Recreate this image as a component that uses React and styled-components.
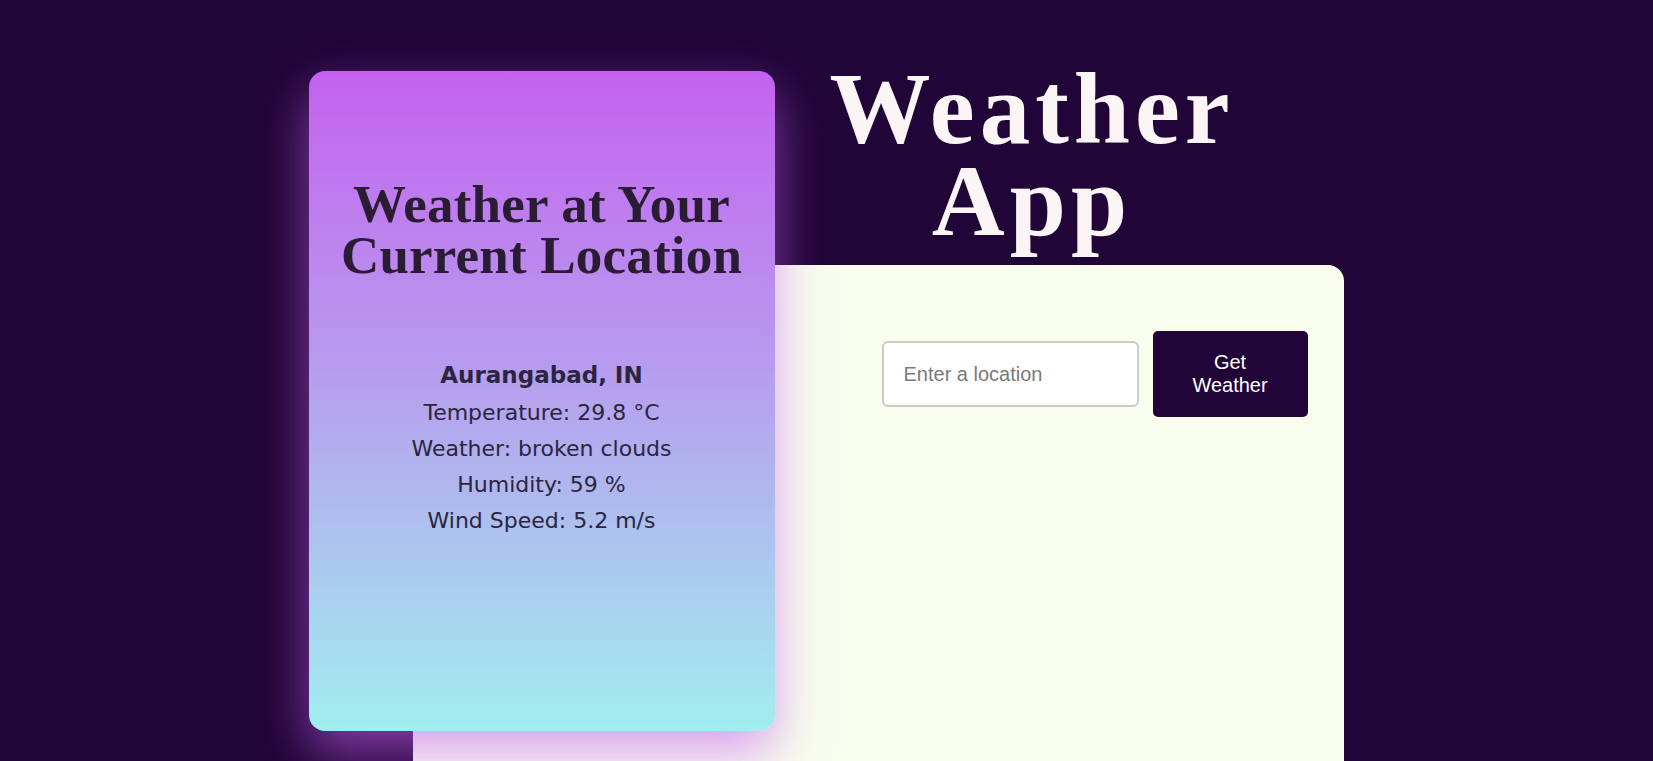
import React from 'react';
import styled, { createGlobalStyle } from 'styled-components';

const GlobalStyle = createGlobalStyle`
    body{
        margin: 0;
        background-color: #220538;
        overflow: hidden;
    }
`;

export default function App() {
    return(
        <>
            <GlobalStyle />
            <PageStyled>
                <StageStyled>
                    <CurrentCard>
                        <h2>Weather at Your Current Location</h2>
                        <div className="info">
                            <h3>Aurangabad, IN</h3>
                            <p>Temperature: 29.8 °C</p>
                            <p>Weather: broken clouds</p>
                            <p>Humidity: 59 %</p>
                            <p>Wind Speed: 5.2 m/s</p>
                        </div>
                    </CurrentCard>
                    <RightColumn>
                        <TitleStyled>Weather<br />App</TitleStyled>
                        <PanelStyled>
                            <SearchRow>
                                <input type="text" placeholder="Enter a location" />
                                <button>Get<br />Weather</button>
                            </SearchRow>
                        </PanelStyled>
                    </RightColumn>
                </StageStyled>
            </PageStyled>
        </>
    )
}

const PageStyled = styled.div`
    display: flex;
    justify-content: center;
    min-height: 100vh;
`;

const StageStyled = styled.div`
    display: flex;
    align-items: flex-start;
    width: 1035px;
    margin-left: -1px;
`;

const CurrentCard = styled.div`
    position: relative;
    z-index: 2;
    flex: none;
    display: flex;
    flex-direction: column;
    align-items: center;
    box-sizing: border-box;
    width: 466px;
    height: 660px;
    margin-top: 71px;
    padding-top: 108px;
    border-radius: 16px;
    background: linear-gradient(180deg, #c462ef 0%, #b79cee 45%, #a1eeef 100%);
    box-shadow: 0 22px 50px rgba(196, 98, 240, 0.6);
    text-align: center;
    h2{
        margin: 0;
        width: 420px;
        font-family: "Liberation Serif", serif;
        font-weight: bold;
        font-size: 53px;
        line-height: 51px;
        letter-spacing: 0.2px;
        color: #2a1c33;
    }
    .info{
        margin-top: 75px;
        font-family: "DejaVu Sans", sans-serif;
        color: #2b2540;
    }
    h3{
        margin: 0;
        font-size: 23px;
        font-weight: 600;
        line-height: 39px;
    }
    p{
        margin: 0;
        font-size: 22px;
        line-height: 36px;
    }
`;

const RightColumn = styled.div`
    display: flex;
    flex-direction: column;
    flex: none;
    width: 931px;
    margin-left: -362px;
`;

const TitleStyled = styled.h1`
    margin: 63px 0 18px 0;
    padding: 0 54px 0 362px;
    font-family: "Liberation Serif", serif;
    font-weight: bold;
    font-size: 101px;
    line-height: 92px;
    letter-spacing: 5px;
    text-align: center;
    color: #fbf5f5;
`;

const PanelStyled = styled.div`
    height: 560px;
    padding-top: 66px;
    box-sizing: border-box;
    background-color: #f8fdee;
    border-radius: 16px 16px 0 0;
`;

const SearchRow = styled.div`
    display: flex;
    justify-content: flex-end;
    align-items: center;
    gap: 14px;
    padding-right: 36px;
    input{
        box-sizing: border-box;
        width: 257px;
        height: 66px;
        padding: 0 20px;
        border: 2px solid #cbcbcb;
        border-radius: 6px;
        background: #fff;
        font-family: "Liberation Sans", Arial, sans-serif;
        font-size: 20px;
        outline: none;
    }
    input::placeholder{
        color: #7a7a7a;
    }
    button{
        width: 155px;
        height: 86px;
        border: none;
        border-radius: 5px;
        background-color: #220538;
        color: #fff;
        font-family: "Liberation Sans", Arial, sans-serif;
        font-size: 20px;
        line-height: 23px;
        cursor: pointer;
    }
`;
